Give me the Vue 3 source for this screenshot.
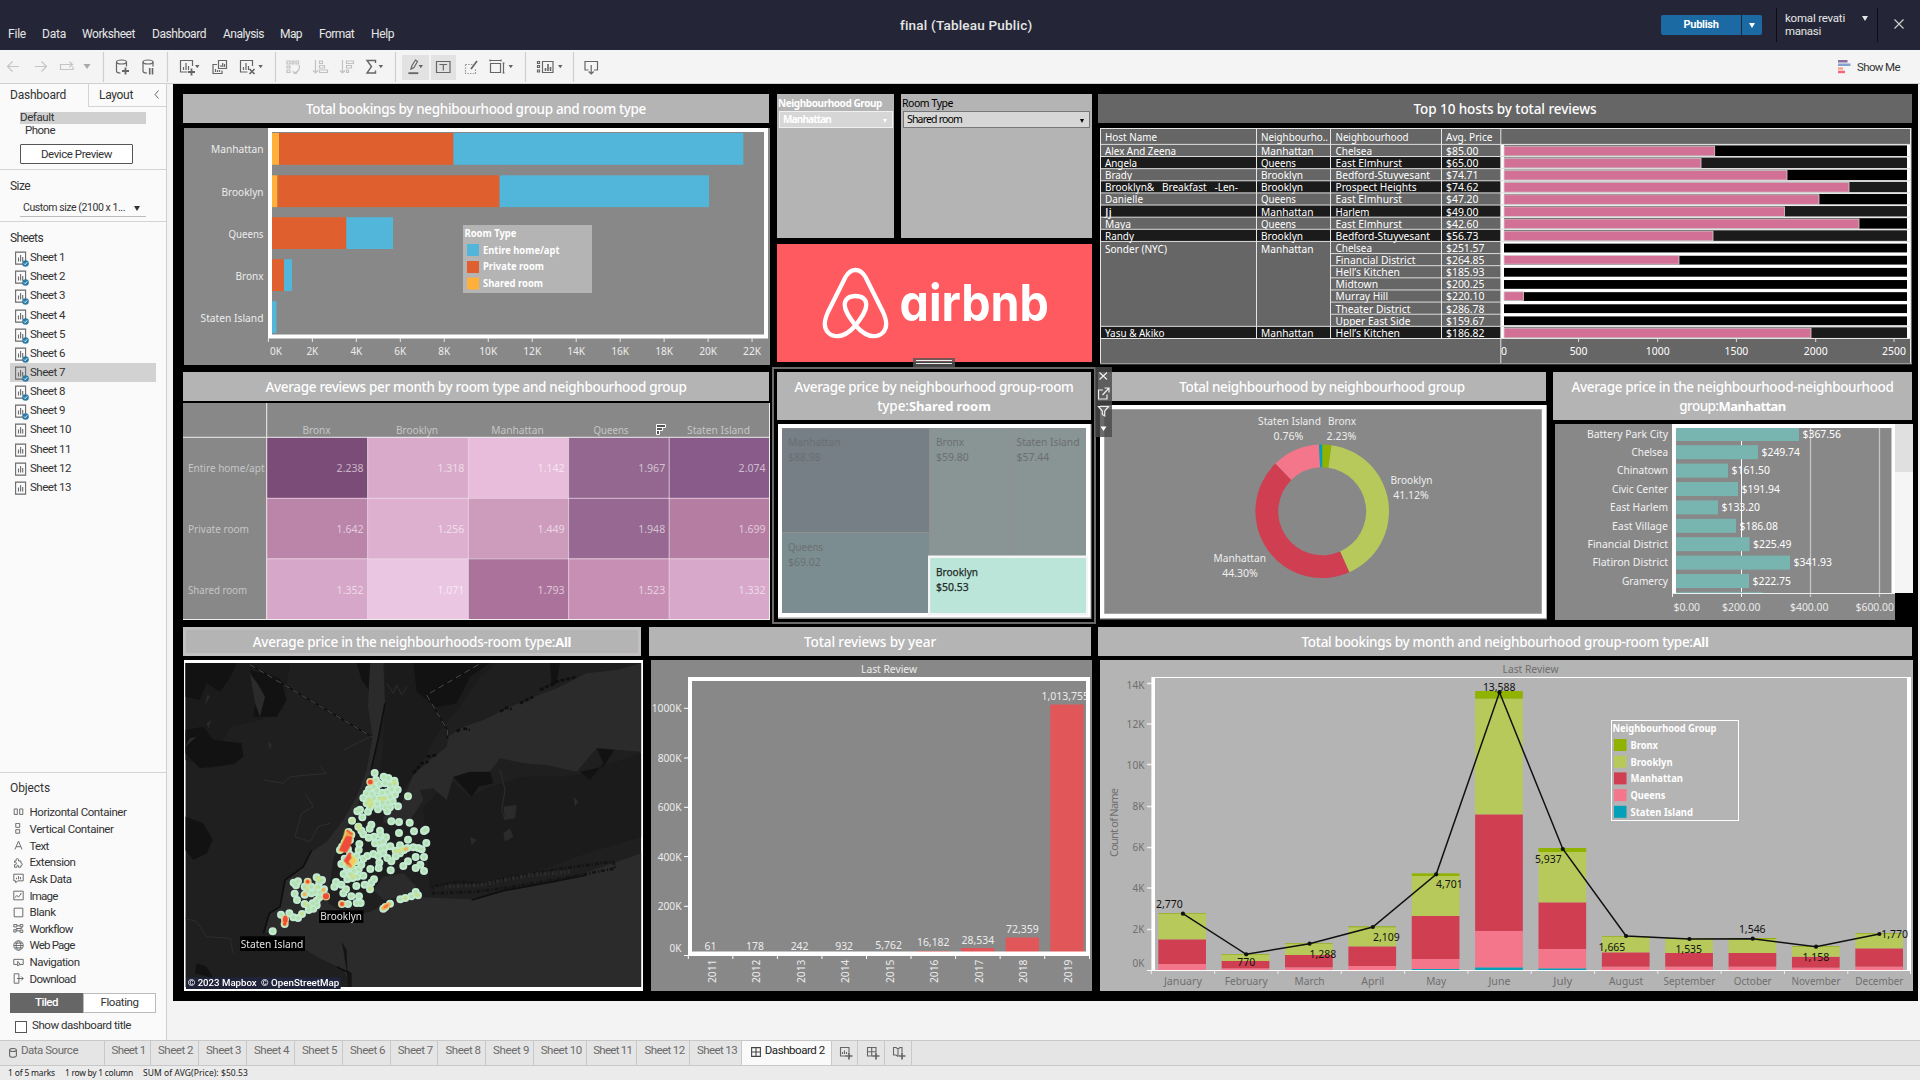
<script setup>
import { h } from 'vue'

/* Widths of the recurring category names on the charts */
const names = {
  'Manhattan': 52.5, 'Brooklyn': 42, 'Queens': 35, 'Bronx': 28, 'Staten Island': 63,
  'East Elmhurst': 66.5, 'Bedford-Stuyvesant': 94.5, 'Prospect Heights': 81, 'Chelsea': 36.5, 'Harlem': 34,
  'Financial District': 80, 'Hell’s Kitchen': 64.5, 'Midtown': 42.5, 'Murray Hill': 52.5,
  'Theater District': 75, 'Upper East Side': 75,
}
const widthOf = t => {
  if (names[t]) return names[t]
  if (!/^[$\d.,%K]+$/.test(t)) return undefined
  return [...t].reduce((s, c) => s + ('.,'.includes(c) ? 2.9 : c === '%' ? 9 : 5.95), 0).toFixed(1)
}

/* Chart label: y is the vertical middle of the text, w an optional exact width */
const Tx = (p, { slots }) => {
  const kids = slots.default()
  const w = p.w || widthOf(String(kids[0].children).trim())
  return h('text', {
    x: p.x,
    y: Number(p.y) + Number(p.s || 11) * 0.36,
    'text-anchor': p.a || 'start',
    textLength: w,
    lengthAdjust: w ? 'spacingAndGlyphs' : undefined,
    'font-size': p.s || 11,
    'font-weight': p.b ? 700 : undefined,
    fill: p.f,
  }, kids)
}
Tx.props = ['x', 'y', 'w', 'a', 's', 'b', 'f']

/* Tracks a label so that it takes the given width */
const vFit = {
  mounted(el, { value }) {
    if (!value) return
    const r = document.createRange()
    r.selectNodeContents(el)
    const n = el.textContent.length
    el.style.letterSpacing = (value - r.getBoundingClientRect().width) / n + 'px'
  },
}

const menu = [['File', 8, 18], ['Data', 42, 24], ['Worksheet', 82, 53], ['Dashboard', 152, 54], ['Analysis', 223, 41], ['Map', 280, 22], ['Format', 319, 35], ['Help', 371, 23]]
  .map(([t, x, w], i, a) => ({ t, w, slot: (a[i + 1] ? a[i + 1][1] : 400) - x }))

const sheets = Array.from({ length: 13 }, (_, i) => ({ n: i + 1, used: i < 9, on: i === 6 }))
const objects = [['Horizontal Container', 97], ['Vertical Container', 84], ['Text', 19], ['Extension', 46], ['Ask Data', 42], ['Image', 28], ['Blank', 26], ['Workflow', 43], ['Web Page', 45], ['Navigation', 50], ['Download', 46]]
const objIcons = [
  'M1.5 2.5h4v7h-4zM8.5 2.5h4v7h-4z',
  'M3.5 .5h5v5h-5zM3.5 8.5h5v4.5h-5z',
  'M2.5 12L7 1.500L11.500 12M4 8.500h6',
  'M4 5V3.500a1.500 1.500 0 0 1 3 0V5h3v2.500a1.700 1.700 0 0 1 0 3.500H10v2H7v-1.500a1 1 0 0 0-2 0V13H2v-3.500H3a1.300 1.300 0 0 0 0-2.700H2V5z',
  'M1 1.500h12v8.500H6l-2.500 2.500V10H1zM4.500 8V6M7 8V4M9.500 8V5',
  'M1 1.500h12v11H1zM2 10l3-3 2 2 3.500-4.500M9.500 4.500h1',
  'M1.500 1.500h11v11h-11z',
  'M1 2h4v3H1zM9 2h3.500v3H9zM1 8.500h3v3H1zM9 9h3.500v3H9zM5 3.500h4M4 7h7V5M5 7v3h4',
  'M7 1a6 6 0 1 0 .01 0M1 7h12M7 1c-4 3-4 9 0 12M7 1c4 3 4 9 0 12M2 4h10M2 10h10',
  'M1 3h12v6.500h-3M1 3v6.500h4M6 5.500v6l1.600-1.600h2.200z',
  'M1.500 1h6v12h-6zM5 7h8M10.500 4.500L13 7l-2.500 2.500',
]

const tabs = [['Sheet 1', 46, 34], ['Sheet 2', 48, 35], ['Sheet 3', 48, 35], ['Sheet 4', 48, 35], ['Sheet 5', 48, 35], ['Sheet 6', 48, 35], ['Sheet 7', 47.5, 35], ['Sheet 8', 48, 35], ['Sheet 9', 48, 36], ['Sheet 10', 52.5, 41], ['Sheet 11', 50.5, 39], ['Sheet 12', 53, 40], ['Sheet 13', 52, 40]]

/* Bookings by group and room type */
const BL = '#52b6da', OR = '#e05f2e', YE = '#ffb03b'
const rooms = [
  { n: 'Manhattan', y: 133, s: [[272, 279, YE], [279, 453.5, OR], [453.5, 743.3, BL]] },
  { n: 'Brooklyn', y: 175.3, s: [[272, 277.5, YE], [277.5, 499.6, OR], [499.6, 709, BL]] },
  { n: 'Queens', y: 217.2, s: [[272, 346.3, OR], [346.3, 393, BL]] },
  { n: 'Bronx', y: 259.2, s: [[272, 284, OR], [284, 292, BL]] },
  { n: 'Staten Island', y: 301.2, s: [[272, 276.5, BL]] },
]
const kTicks = Array.from({ length: 12 }, (_, i) => ({ x: 268.4 + i * 43.97, t: i * 2 + 'K' }))

/* Hosts */
const hosts = [
  ['Alex And Zeena', 71, 'Manhattan', 'Chelsea', '$85.00', 1714.7],
  ['Angela', 32, 'Queens', 'East Elmhurst', '$65.00', 1701],
  ['Brady', 27, 'Brooklyn', 'Bedford-Stuyvesant', '$74.71', 1787],
  ['Brooklyn&\u00a0\u00a0 Breakfast\u00a0\u00a0 -Len-', 133, 'Brooklyn', 'Prospect Heights', '$74.62', 1849],
  ['Danielle', 38, 'Queens', 'East Elmhurst', '$47.20', 1819],
  ['Jj', 7, 'Manhattan', 'Harlem', '$49.00', 1784.5],
  ['Maya', 26, 'Queens', 'East Elmhurst', '$42.60', 1859],
  ['Randy', 29, 'Brooklyn', 'Bedford-Stuyvesant', '$56.73', 1713],
  ['Sonder (NYC)', 62, 'Manhattan', 'Chelsea', '$251.57', 0],
  ['', 0, '', 'Financial District', '$264.85', 1679],
  ['', 0, '', 'Hell’s Kitchen', '$185.93', 0],
  ['', 0, '', 'Midtown', '$200.25', 0],
  ['', 0, '', 'Murray Hill', '$220.10', 1523.5],
  ['', 0, '', 'Theater District', '$286.78', 0],
  ['', 0, '', 'Upper East Side', '$159.67', 0],
  ['Yasu & Akiko', 59.5, 'Manhattan', 'Hell’s Kitchen', '$186.82', 1811],
].map((r, i) => ({
  name: r[0], w: r[1], group: r[2], hood: r[3], price: r[4], end: r[5], i,
  y: 144.4 + i * 12.13,
  dark: [1, 3, 5, 7, 15].includes(i),
  sub: i > 7 && i < 15,
  bx: i > 7 && i < 15 ? 2.4 : 1.2,
}))
const hostTicks = [['0', 1504], ['500', 1578.6], ['1000', 1657.7], ['1500', 1736.4], ['2000', 1815.7], ['2500', 1894]]

/* Reviews per month */
const cx = [266.7, 367.6, 468.4, 568.6, 669.2, 769.6]
const cy = [437, 498, 558.5, 619.3]
const heatHead = [['Bronx', 316.5], ['Brooklyn', 417], ['Manhattan', 517.5], ['Queens', 611], ['Staten Island', 718.5]]
const heat = [
  ['Entire home/apt', 76.5, [['2.238', '#7b4c77'], ['1.318', '#d9aaca'], ['1.142', '#e7bddb'], ['1.967', '#936790'], ['2.074', '#895b8a']]],
  ['Private room', 61, [['1.642', '#bb84a9'], ['1.256', '#ddb0d0'], ['1.449', '#cd9bbc'], ['1.948', '#966892'], ['1.699', '#b57da2']]],
  ['Shared room', 59, [['1.352', '#d6a7c8'], ['1.071', '#eac6e2'], ['1.793', '#ab739b'], ['1.523', '#c78fb4'], ['1.332', '#d7a8c9']]],
]

/* Share of groups */
const shares = [[2.23, '#8fb300'], [41.12, '#b6c95a'], [44.3, '#d03e52'], [11.59, '#f3768a'], [0.76, '#049fb8']]
let acc = 0
const arcs = shares.map(([v, c]) => {
  const p = (r, t) => `${(1322.2 + r * Math.sin(t * Math.PI / 50)).toFixed(2)} ${(511.3 - r * Math.cos(t * Math.PI / 50)).toFixed(2)}`
  const a = acc
  acc += v
  return { c, d: `M${p(66.8, a)}A66.8 66.8 0 0 1 ${p(66.8, acc)}L${p(44, acc)}A44 44 0 0 0 ${p(44, a)}Z` }
})

/* Price per neighbourhood */
const prices = [['Battery Park City', 81, '$367.56', 1799], ['Chelsea', 36.5, '$249.74', 1758], ['Chinatown', 51, '$161.50', 1728], ['Civic Center', 56, '$191.94', 1738], ['East Harlem', 58, '$133.20', 1718], ['East Village', 56, '$186.08', 1736], ['Financial District', 80.5, '$225.49', 1749.5], ['Flatiron District', 75.5, '$341.93', 1790], ['Gramercy', 46, '$222.75', 1749]]
  .map(([n, w, v, e], i) => ({ n, w, v, e, y: 434 + i * 18.4 }))

/* Reviews by year */
const years = [['2011', '61', 946.5, 0], ['2012', '178', 946.5, 0], ['2013', '242', 946.5, 0], ['2014', '932', 946.5, 0], ['2015', '5,762', 945, 0], ['2016', '16,182', 942.5, 951], ['2017', '28,534', 940, 948], ['2018', '72,359', 929, 937.5], ['2019', '1,013,755', 696.3, 704.5]]
  .map(([yr, v, ly, top], i) => ({ yr, v, ly, top, x: 710.5 + i * 44.55 }))
const yearAxis = [['1000K', 708.3], ['800K', 758], ['600K', 807.3], ['400K', 856.6], ['200K', 906.3]]

/* Bookings by month: tops of the stacked segments, staten island up to bronx */
const MX = v => 1090 + v / 1.889
const MY = v => 620 + v / 3
const months = [
  ['January', [1050, 1032, 958, 881, 879], 881, '2,770', 150, 853, 38],
  ['February', [1050, 1045, 1023, 1004, 1002], 1003, '770', 295, 1027, 43],
  ['March', [1050, 1042, 1005, 971, 969], 971, '1,288', 440, 1003, 30],
  ['April', [1050, 1038, 979, 922, 919], 921, '2,109', 560, 952, 23],
  ['May', [1047, 1017, 888, 768, 760], 763, '4,701', 679, 793, 20],
  ['June', [1042, 933, 583, 236, 213], 217, '13,588', 773, 201, 22],
  ['July', [1045, 987, 847, 696, 684], 687, '5,937', 866, 718, 19],
  ['August', [1050, 1040, 997, 950, 948], 948, '1,665', 986, 980, 34],
  ['September', [1050, 1040, 999, 957, 955], 957, '1,535', 1131, 988, 52],
  ['October', [1050, 1040, 999, 957, 954], 956, '1,546', 1251, 928, 38],
  ['November', [1050, 1043, 1010, 980, 978], 980, '1,158', 1371, 1010, 49],
  ['December', [1050, 1040, 985, 941, 939], 942, '1,770', 1520, 942, 48],
].map(([n, tops, ly, v, lx, lby, w], i) => ({
  n, v, w, x: MX(129 + 119.7 * i), c: MX(175.5 + 119.6 * i), py: MY(ly), lx: MX(lx), lby: MY(lby),
  segs: tops.map((t, k) => ({ y: MY(t), h: ((k ? tops[k - 1] : 1050) - t) / 3, c: ['#049fb8', '#f3768a', '#d03e52', '#b6c95a', '#8fb300'][k] })),
}))
const monthLine = months.map(m => m.c.toFixed(1) + ',' + m.py.toFixed(1)).join(' ')
const countAxis = [['14K', 685, 683.5], ['12K', 724, 724], ['10K', 765, 764.5], ['8K', 806.5, 806.5], ['6K', 847.5, 847.5], ['4K', 888, 888], ['2K', 929.5, 929.5], ['0K', 963, 0]]
const groupKey = [['Bronx', '#8fb300', 27.5], ['Brooklyn', '#b6c95a', 42], ['Manhattan', '#d03e52', 52.5], ['Queens', '#f3768a', 35], ['Staten Island', '#049fb8', 62.5]]

/* Density map points */
const dots = `614 459 641 470 655 474 673 482 601 486 618 480 597 508 611 500 628 492 645 490 660 494 675 492 665 508 683 509 620 512 636 518 652 516 606 522 590 520 580 534 596 538 612 534 628 534 644 534 660 530 675 524 590 550 604 554 622 552 638 548 654 548 668 544 684 559 600 562 624 568 646 562 660 562 652 574 594 575 577 592 562 574 570 569 546 602 714 529
664 604 687 606 719 608 732 634 762 633 767 629 687 639 714 659 769 669 730 682 755 688 762 711 737 711 751 734 737 744 762 753 700 738 714 724 662 751 652 714 664 724 677 709 690 700 677 692 661 679 644 683 631 687 690 676 702 690 712 684 745 684
565 620 574 632 580 643 596 653 604 614 599 626 612 650 615 670 630 632 631 645 648 652 640 664 628 668 568 672 566 690 592 708 610 702 624 708 640 700 628 728 626 744 601 747 580 716 574 734 566 748 552 752 540 762 521 762 580 767 562 770 548 774 532 778 498 786 493 800 514 794 528 808 520 820 559 798 584 794 604 788 612 778 600 808 544 829 567 829 560 849 572 849 534 852 516 852
536 636 544 644 540 660 524 668 516 680 510 690 534 688 540 704 524 716 514 732 530 742 546 742 556 724 560 708
371 788 378 796 384 784 413 785 404 800 412 812 424 800 440 772 448 786 456 780 445 800 462 808 468 829 450 818 436 816 424 820 404 824 374 821 381 840 404 852 416 858 428 850 440 842 448 832 416 870 430 866 440 856
333 884 358 880 370 892 384 894 396 882 345 898 344 912 308 934 660 851 646 861 640 866 691 838 706 834 724 829 737 816 744 826`.split(/\s+/).map(Number)
const pts = []
for (let i = 0; i < dots.length; i += 2) pts.push([dots[i], dots[i + 1]])
</script>

<template>
  <div class="app">
    <header class="top">
      <nav class="menu"><span v-for="m in menu" :key="m.t" :style="{ width: m.slot + 'px' }"><b v-fit="m.w">{{ m.t }}</b></span></nav>
      <div class="doc"><span v-fit="132">final (Tableau Public)</span></div>
      <div class="account">
        <div class="publish"><span v-fit="35">Publish</span></div>
        <div class="publish-more"><i class="tri"></i></div>
        <div class="user"><p><span v-fit="60">komal revati</span><br><span v-fit="36">manasi</span></p><i class="tri"></i></div>
        <svg class="close" width="10" height="10" viewBox="0 0 10 10"><path d="M.5 .5L9.5 9.500M9.500 .5L.5 9.500" /></svg>
      </div>
    </header>

    <div class="toolbar">
      <svg width="600" height="33" viewBox="0 50 600 33" fill="none" stroke="#666" stroke-width="1.200">
        <g stroke="#c4c4c4"><path d="M19 66.500H8M12.500 61.500l-5 5 5 5M35 66.500h11M41.500 61.500l5 5-5 5" /><path d="M60.500 65.500v4h12.500v-3M60.500 67v-2.500h11.500M69.500 61.800l3 2.700-3 2.700" /></g>
        <path d="M83.500 64h7l-3.500 5z" fill="#aaa" stroke="none" />
        <path d="M103.500 52v30M167.500 52v30M275.500 52v30M395.500 52v30M525.500 52v30M573.500 52v30" stroke="#cfcfcf" />
        <g><ellipse cx="121.500" cy="62" rx="5" ry="2" /><path d="M116.500 62v9c0 1 1.500 2 4 2M126.500 62v4.500" /><path d="M125.500 67.500v7M122 71h7" stroke-width="1.800" /></g>
        <g><ellipse cx="148" cy="62" rx="5" ry="2" /><path d="M143 62v9c0 1 1.500 2 4 2M153 62v4.500" /><path d="M149.700 68v6.500M152.500 68v6.500" stroke-width="1.600" /></g>
        <path d="M192.500 66v-5.500h-12V72h7M183.500 70v-3M186 70v-7M188.500 70v-4" /><path d="M191.500 68.500v7M188 72h7" stroke-width="1.800" />
        <path d="M218.500 60.500h8v8h-8zM217 64.500h-4v9h9v-3M221 67v-2M222.700 67v-4M224.500 67v-3M215.500 72v-3M217.500 72v-2M219.500 72v-2" />
        <path d="M252.500 66v-5.500h-12V72h7M243.500 70v-3M246 70v-7M248.500 70v-4" /><path d="M249.500 69l5 5M254.500 69l-5 5" stroke-width="1.700" />
        <g stroke="#c2c2c2"><path d="M287 61h3v3h-3zM292 61h2v3h-2zM296 61h2.500v3H296zM287 66h3v2h-3zM287 70h3v2.500h-3zM299 65c1.500 4-1 7-5 8M293 71l1.500 2.500 3-.5" />
          <path d="M315.500 60v13M313 70.500l2.500 2.500 2.500-2.500M319.500 61h3v2.500h-3zM319.500 65.500h5V68h-5zM319.500 70h8v2.500h-8z" />
          <path d="M342.500 60v13M340 70.500l2.500 2.500 2.500-2.500M346.500 61h7v2.500h-7zM346.500 65.500h5V68h-5zM346.500 70h2v2.500h-2z" /></g>
        <path d="M375.500 63v-2.500H367l4.500 6-4.500 6.500h8.500V70.500" stroke-width="1.400" />
        <path d="M402 55h27v25h-27zM431 55h25v25h-25z" fill="#e2e2e2" stroke="none" />
        <path d="M411 69l1-3.500 3.500-5.500 2 1.500-3.500 6zM408.500 73h10" /><path d="M408.500 73.300h9.500" stroke-width="1.600" />
        <path d="M436.500 61.500h13.500v11h-13.500z" /><path d="M440 65v-.5h6.500v.5M443.300 64.500v6" />
        <path d="M465.500 64.500h7M465.500 64.500v9h10v-5" stroke="#999" stroke-dasharray="1.500 1.200" /><path d="M471 69l6-8" stroke-width="1.700" />
        <path d="M490.500 63.500h10v9h-10zM490 60.500h11M503.500 63v10M490 59.500v2M501 59.500v2M502.500 63h2M502.500 73h2" />
        <path d="M542.500 61.500h10.500v11h-10.500zM537.500 61.500h2v2h-2zM537.500 65.500h2v2h-2zM537.500 70h2v2h-2z" /><path d="M545.500 71v-3M548 71v-7M550.500 71v-4" stroke-width="1.600" />
        <path d="M588.500 70h-3.500v-8.500h12.500V70H594M591.200 65v9M588.700 71.500l2.500 2.500 2.500-2.500" />
        <path d="M195 65h4.500l-2.200 3.300zM258.300 65h4.500l-2.200 3.300zM378.600 65h4.500l-2.200 3.300zM418.500 65h4.500l-2.200 3.300zM508.500 65h4.500l-2.200 3.300zM558 65h4.500l-2.200 3.300z" fill="#666" stroke="none" />
      </svg>
      <div class="showme">
        <svg width="14" height="15" viewBox="0 0 14 15"><path d="M0 1h9.500v2.500H0z" fill="#8a6fa0" /><path d="M0 4.500h12.500V7H0z" fill="#84a2cf" /><path d="M0 8.300h5v2.500H0z" fill="#f7a58a" /><path d="M0 11.700h7v2.500H0z" fill="#f5647a" /></svg>
        <span v-fit="43">Show Me</span>
      </div>
    </div>

    <main>
      <aside>
        <div class="side-tabs">
          <div class="st on"><span v-fit="56">Dashboard</span></div>
          <div class="st"><span v-fit="34">Layout</span><svg width="5" height="9" viewBox="0 0 5 9"><path d="M4.500 .5L1 4.500 4.500 8.500" fill="none" stroke="#666" /></svg></div>
        </div>
        <div class="devices">
          <p class="dev on"><span v-fit="34">Default</span></p>
          <p class="dev ph"><span v-fit="30">Phone</span></p>
          <div class="preview"><span v-fit="71">Device Preview</span></div>
        </div>
        <div class="size">
          <h4><span v-fit="20">Size</span></h4>
          <div class="drop"><span v-fit="102">Custom size (2100 x 1...</span><i class="tri"></i></div>
        </div>
        <div class="sheets">
          <h4><span v-fit="33">Sheets</span></h4>
          <div v-for="s in sheets" :key="s.n" class="sheet" :class="{ on: s.on }">
            <svg width="15" height="17" viewBox="0 0 15 17"><path d="M.6 2.100h10v12h-10zM3.500 11.500v-4M5.600 11.500V5M7.700 11.500V7" fill="none" stroke="#6a6a6a" stroke-width="1.100" /><g v-if="s.used"><circle cx="10.500" cy="13.500" r="3.300" fill="#2b7ba5" /><path d="M9 13.500l1.200 1.200 2-2.400" fill="none" stroke="#fff" stroke-width=".9" /></g></svg>
            <span v-fit="s.n > 9 ? 41 : 35">Sheet {{ s.n }}</span>
          </div>
        </div>
        <div class="objects">
          <h4><span v-fit="40">Objects</span></h4>
          <div v-for="(o, i) in objects" :key="i" class="obj">
            <svg width="11" height="11" viewBox="0 0 14 14"><path :d="objIcons[i]" fill="none" stroke="#666" stroke-width="1.200" /></svg>
            <span v-fit="o[1]">{{ o[0] }}</span>
          </div>
          <div class="mode"><b><span v-fit="23">Tiled</span></b><b><span v-fit="38">Floating</span></b></div>
          <div class="check"><i></i><span v-fit="99">Show dashboard title</span></div>
        </div>
      </aside>

      <section class="board">
        <div class="row r1">
          <div class="zone z1">
            <h3><span v-fit="340">Total bookings by neghibourhood group and room type</span></h3>
            <svg width="586" height="237" viewBox="184 128 586 237" class="chart">
              <rect x="184" y="128" width="586" height="237" fill="#888" />
              <rect x="270" y="130" width="496" height="206.500" fill="none" stroke="#fff" stroke-width="4" />
              <g v-for="r in rooms" :key="r.n">
                <rect v-for="(s, k) in r.s" :key="k" :x="s[0]" :y="r.y" :width="s[1] - s[0]" height="31.800" :fill="s[2]" />
                <Tx x="263.500" :y="r.y + 16.500" a="end" f="#ececec">{{ r.n }}</Tx>
              </g>
              <g v-for="(k, i) in kTicks" :key="k.t"><path :d="`M${k.x} 338v4`" stroke="#e8e8e8" /><Tx :x="i ? k.x : 276" y="351.700" a="middle" s="10.500" f="#ececec">{{ k.t }}</Tx></g>
              <rect x="463" y="225" width="129" height="68" fill="#b4b4b4" />
              <Tx x="464.500" y="233.700" w="52" b="1" s="10.500">Room Type</Tx>
              <rect x="467" y="244" width="12" height="12" :fill="BL" /><Tx x="483" y="250.200" w="76.500" b="1" s="10.500">Entire home/apt</Tx>
              <rect x="467" y="261" width="12" height="12" :fill="OR" /><Tx x="483" y="266.700" w="61" b="1" s="10.500">Private room</Tx>
              <rect x="467" y="277.500" width="12" height="12" :fill="YE" /><Tx x="483" y="283.500" w="60" b="1" s="10.500">Shared room</Tx>
            </svg>
          </div>
          <div class="zone z2">
            <div class="filters">
              <div class="filter f1"><span v-fit="104">Neighbourhood Group</span><div class="sel"><span v-fit="48">Manhattan</span><i class="tri"></i></div></div>
              <div class="filter f2"><span v-fit="51">Room Type</span><div class="sel"><span v-fit="55">Shared room</span><i class="tri"></i></div></div>
            </div>
            <svg width="315" height="118" viewBox="777 244 315 118" class="logo">
              <rect x="777" y="244" width="315" height="118" fill="#ff5a60" />
              <path d="M855.500 325.500C849 317 844.700 311 844.700 304.800C844.700 299 849 296 855.500 296C862 296 866.300 299 866.300 304.800C866.300 311 862 317 855.500 325.500C848 334 843 336.200 837.500 336.200C829 336.200 824.800 330 824.800 324C824.800 320 826 316.500 828 312L845.500 277C848.500 272 851.500 270 855.500 270C859.500 270 862.500 272 865.500 277L883 312C885 316.500 886.200 320 886.200 324C886.200 330 882 336.200 873.500 336.200C868 336.200 863 334 855.500 325.500Z" fill="none" stroke="#fff" stroke-width="4.300" />
              <text x="899.500" y="320.500" textLength="149.500" lengthAdjust="spacingAndGlyphs" class="wordmark">airbnb</text>
            </svg>
          </div>
          <div class="zone z3">
            <h3 class="dark"><span v-fit="183">Top 10 hosts by total reviews</span></h3>
            <svg width="812" height="236.500" viewBox="1100 128 812 236.500" class="chart">
              <rect x="1100" y="128" width="812" height="236.500" fill="#666" />
              <rect x="1501" y="144" width="410" height="194.500" fill="#fff" />
              <g v-for="r in hosts" :key="r.i">
                <rect v-if="r.dark" x="1100" :y="r.y" width="401" height="12.100" fill="#1b1b1b" />
                <rect x="1504" :y="r.y + r.bx - .2" width="403" :height="r.sub ? 8.800 : 10.600" :fill="r.dark ? '#1b1b1b' : '#000'" />
                <rect v-if="r.end" x="1504" :y="r.y + 1.800" :width="r.end - 1504" :height="r.sub ? 8.800 : 9.600" fill="#d27195" stroke="#d9d0d4" stroke-width=".8" />
                <path v-if="r.i < 9 || r.i > 14" :d="`M1100 ${r.y}H1911`" stroke="#ddd" />
                <path v-else :d="`M1330 ${r.y}H1501`" stroke="#ddd" />
                <Tx v-if="r.name" x="1105" :y="r.y + (r.i === 8 ? 7.700 : 6.500)" :w="r.w">{{ r.name }}</Tx>
                <Tx v-if="r.group" x="1261" :y="r.y + (r.i === 8 ? 7.700 : 6.500)">{{ r.group }}</Tx>
                <Tx x="1335.500" :y="r.y + 6.500">{{ r.hood }}</Tx>
                <Tx x="1446" :y="r.y + 6.500" :w="r.price.length > 6 ? 38.500 : 32.500">{{ r.price }}</Tx>
              </g>
              <path d="M1100 128.500H1911M1100 338.500H1911M1256.500 128V338.500M1330.500 128V338.500M1441.500 128V338.500M1500.800 128V364M1100.500 128V363M1910.500 128V363" stroke="#e4e4e4" fill="none" />
              <path d="M1100 363.500H1912" stroke="#999" />
              <Tx x="1105" y="137.300" w="52">Host Name</Tx><Tx x="1261" y="137.300" w="67">Neighbourho..</Tx><Tx x="1335.500" y="137.300" w="73">Neighbourhood</Tx><Tx x="1446" y="137.300" w="46.500">Avg. Price</Tx>
              <g v-for="t in hostTicks" :key="t[0]"><path v-if="t[0] !== '0'" :d="`M${t[1]} 339v3`" stroke="#ddd" /><Tx :x="t[1]" y="351.700" a="middle" s="10.500">{{ t[0] }}</Tx></g>
            </svg>
          </div>
        </div>

        <div class="row r2">
          <div class="zone z1">
            <h3><span v-fit="421">Average reviews per month by room type and neighbourhood group</span></h3>
            <svg width="587" height="217" viewBox="183 403 587 217" class="chart">
              <rect x="183" y="403" width="587" height="217" fill="#888" />
              <Tx v-for="c in heatHead" :key="c[0]" :x="c[1]" y="430.500" a="middle" f="#c6c6c6">{{ c[0] }}</Tx>
              <g v-for="(r, i) in heat" :key="r[0]">
                <Tx x="188" :y="cy[i] + 31.500" :w="r[1]" f="#c6c6c6">{{ r[0] }}</Tx>
                <g v-for="(c, k) in r[2]" :key="k">
                  <rect :x="cx[k]" :y="cy[i]" :width="cx[k + 1] - cx[k]" :height="cy[i + 1] - cy[i]" :fill="c[1]" />
                  <Tx :x="cx[k + 1] - 4" :y="cy[i] + 31.500" a="end" w="27" f="rgba(255,255,255,.6)">{{ c[0] }}</Tx>
                </g>
              </g>
              <path d="M266.700 403V619M183 437.300H770M769.500 403V619M183 619.500H770" stroke="#eee" fill="none" />
              <path d="M367.600 437V619M468.400 437V619M568.600 437V619M669.200 437V619M267 498.300H770M267 558.800H770" stroke="#f2dcec" fill="none" stroke-opacity=".75" />
              <path d="M656.500 424.500h9v3h-9zM656.500 427.500h6v3h-6zM656.500 430.500h3v4h-3z" fill="#555" stroke="#fff" />
            </svg>
          </div>
          <div class="zone z2">
            <h3 class="two"><span v-fit="279">Average price by neighbourhood group-room</span><br><span v-fit="113.500">type:<b>Shared room</b></span></h3>
            <svg width="314" height="196" viewBox="778 424 314 196" class="chart">
              <rect x="778" y="424" width="313.500" height="195" fill="#999" />
              <rect x="778" y="424" width="312.500" height="193.500" fill="#fff" />
              <rect x="782" y="428" width="304" height="185" fill="#918f90" />
              <rect x="782" y="428.500" width="147" height="103.500" fill="#767e86" />
              <rect x="782" y="533" width="147" height="80" fill="#7b8d90" />
              <rect x="930" y="428.500" width="79.300" height="128" fill="#899494" />
              <rect x="1010.200" y="428.500" width="75.800" height="128" fill="#899494" />
              <rect x="928" y="555.500" width="160" height="60" fill="#f5f5f5" />
              <rect x="930.200" y="558" width="155.800" height="55" fill="#bce5d9" />
              <g fill="#6b6f72"><Tx x="788" y="442.300">Manhattan</Tx><Tx x="788" y="457.300">$88.98</Tx><Tx x="936" y="442.300">Bronx</Tx><Tx x="936" y="457.300">$59.80</Tx><Tx x="1016.500" y="442.300">Staten Island</Tx><Tx x="1016.500" y="457.300">$57.44</Tx><Tx x="788" y="547.300">Queens</Tx><Tx x="788" y="562.300">$69.02</Tx></g>
              <g fill="#1e2a28" stroke="#1e2a28" stroke-width=".25"><Tx x="936" y="572.300">Brooklyn</Tx><Tx x="936" y="587.300">$50.53</Tx></g>
            </svg>
          </div>
          <div class="zone z4">
            <h3><span v-fit="285.500">Total neighbourhood by neighbourhood group</span></h3>
            <svg width="448" height="215" viewBox="1100 405 448 215" class="chart">
              <rect x="1100" y="405" width="447" height="214.500" fill="#888" />
              <rect x="1102" y="407" width="442" height="209" fill="none" stroke="#fff" stroke-width="4.500" />
              <path v-for="a in arcs" :key="a.c" :d="a.d" :fill="a.c" />
              <g fill="#eee">
                <Tx x="1258" y="421.500">Staten Island</Tx><Tx x="1288.500" y="436.500" a="middle">0.76%</Tx>
                <Tx x="1328" y="421.500">Bronx</Tx><Tx x="1341.500" y="436.500" a="middle">2.23%</Tx>
                <Tx x="1390.500" y="480">Brooklyn</Tx><Tx x="1411" y="495" a="middle">41.12%</Tx>
                <Tx x="1213.500" y="558.300">Manhattan</Tx><Tx x="1240" y="573.300" a="middle">44.30%</Tx>
              </g>
            </svg>
          </div>
          <div class="zone z5">
            <h3 class="two"><span v-fit="322">Average price in the neighbourhood-neighbourhood</span><br><span v-fit="106.500">group:<b>Manhattan</b></span></h3>
            <div class="scroller">
              <svg width="340" height="196" viewBox="1555 424 340 196" class="chart">
                <rect x="1555" y="424" width="340" height="196" fill="#888" />
                <path d="M1674 593V426H1893.500V593" fill="none" stroke="#fff" stroke-width="4" />
                <path d="M1741.500 428V597" stroke="#fff" /><path d="M1810.500 428V597M1879.500 428V597" stroke="#c4c4c4" stroke-width="1.300" />
                <g v-for="(p, i) in prices" :key="p.n">
                  <rect x="1676" :y="i ? p.y - 7.200 : 428" :width="p.e - 1676" :height="i ? 14 : 13" fill="#78b5b0" />
                  <Tx x="1668" :y="p.y - .3" a="end" :w="p.w" f="#f2f2f2">{{ p.n }}</Tx>
                  <Tx :x="p.e + 3.500" :y="p.y - .3" w="38.500">{{ p.v }}</Tx>
                </g>
                <path d="M1676 592.300H1763" stroke="#78b5b0" />
                <path d="M1672 593.500H1895M1672.500 593v4" stroke="#eee" />
                <g fill="#eaeaea"><Tx x="1673.500" y="606.700" w="26.500">$0.00</Tx><Tx x="1722" y="606.700" w="38.500">$200.00</Tx><Tx x="1790" y="606.700" w="38.500">$400.00</Tx><Tx x="1855.500" y="606.700" w="38.500">$600.00</Tx></g>
              </svg>
              <div class="bar"><i></i></div>
            </div>
          </div>
        </div>

        <div class="row r3">
          <div class="zone z6">
            <h3 class="ringed"><span v-fit="318.500">Average price in the neighbourhoods-room type:<b>All</b></span></h3>
            <div class="map">
              <svg width="459" height="331" viewBox="42 120 1377 993">
                <rect x="42" y="120" width="1377" height="993" fill="#fff" />
                <svg x="46" y="129" width="1368" height="972" viewBox="46 129 1368 972">
                  <rect x="46" y="129" width="1368" height="972" fill="#1f1f1f" />
                  <g fill="#1b1b1b"><path d="M46 129H360L340 270L270 300L180 320L150 380L220 380L200 430L120 445L46 420Z" /><path d="M700 129H980L930 170L870 260L810 330L760 420L680 540L620 520L640 380L645 129Z" /><path d="M840 480L900 530L960 500L1060 470L1200 470L1414 400V650L1250 700L1000 790L780 800L760 560Z" /></g>
                  <g fill="#121212"><path d="M46 129H200L185 165L150 215L110 190L90 240L46 230ZM46 330L100 320L130 360L215 370L220 410L190 432L90 445L46 400ZM240 150L330 175L350 240L320 290L250 290L262 220ZM46 590L100 610L128 660L110 700L70 720L46 690ZM560 129H600V215L575 180ZM730 129H960L900 170L860 250L800 262L740 215ZM1140 129H1170L1160 190L1145 200ZM850 470L905 530L925 500L970 490L960 455L900 455ZM1230 455L1260 480L1300 430L1280 385L1340 380L1300 440ZM80 1030L110 1040L130 1075L75 1060ZM1060 405L1075 430H1055Z" /></g>
                  <g fill="#2b2b2b">
                    <path d="M600 129H640L645 250L626 350L605 450L585 500L548 590L510 660L490 720L480 790L475 850L540 890L600 875L650 852L760 832L900 838L1000 815L1200 775L1414 700V1101H545L520 1050L440 1010L400 985L340 960L285 935L300 880L330 860L348 780L400 740L425 695L470 665L520 600L560 530L590 450L608 350L594 260Z" />
                    <path d="M1414 129L1340 150L1250 160L1160 205L1080 235L1000 270L940 300L880 320L835 350L830 380L780 420L730 465L690 560L640 590L640 610L720 600L760 540L750 510L790 505L830 540L850 470L900 455L960 455L990 415L1060 430L1130 435L1220 455L1280 385L1414 395Z" />
                    <path d="M640 770L700 760L740 800L700 830L640 840L610 810Z" />
                    <path d="M262 190L285 230L270 290L255 250L240 160ZM120 230L105 255L112 225ZM80 350L45 380L60 355ZM125 300L115 325L110 310ZM295 365l12 10-10 15zM900 650l20 10-15 15zM1000 560l40-5-5 40-30 5zM1000 640l20-15 10 25-25 15zM1210 530l15 15-10 15z" />
                  </g>
                  <g fill="none" stroke="#2e2e2e" stroke-width="3"><path d="M405 520L430 560L395 580L375 650L420 665L445 620L480 610M280 480L340 490L360 470L470 460L450 440M520 390L600 350M46 895L80 905L110 950L180 955L190 1000M650 190l20 30 10-25 15 30 15-25M990 450l15 60-10 60 10 30" /></g>
                  <g fill="none" stroke="#0f0f0f" stroke-width="5"><path d="M425 690L400 740L345 780L330 860L298 880L280 940M500 1040L540 1060M645 250L626 350L603 450M905 840L1000 812L1150 785L1250 765" /><path d="M860 335l12-8M880 325l20 5M990 275l20-12 15 5M1050 250l40-20M730 460l25-30 20-5M770 410l30-5M1110 210l50-25 60-15" stroke-dasharray="12 5" stroke-width="8" /></g>
                  <path d="M515 965L530 990L532 1050L545 1060V1101H535L530 1055L520 990Z" fill="#141414" />
                  <path d="M785 800L860 785L940 790L1030 770L1180 745L1330 725L1335 745L1180 775L1030 800L920 815L790 820Z" fill="none" stroke="#141414" stroke-width="8" stroke-dasharray="4 6 12 5" />
                  <path d="M825 800L930 795L1080 765L1200 755" fill="none" stroke="#2a2a2a" stroke-width="12" stroke-dasharray="5 6 9 4" />
                  <g fill="none" stroke="#111" stroke-width="5"><path d="M240 134L608 352M925 134L770 225L832 330V360" /></g>
                  <g fill="none" stroke="#555" stroke-width="2.500" stroke-dasharray="18 12"><path d="M240 134L608 352M925 134L770 225L832 330V360" /></g>
                  <circle v-for="(p, i) in pts" :key="'a' + i" :cx="p[0]" :cy="p[1]" r="12" fill="#c3ead3" />
                  <circle v-for="(p, i) in pts" :key="'b' + i" :cx="p[0]" :cy="p[1]" r="6" fill="#b0dea6" opacity=".75" />
                  <g fill="#cfe07c" opacity=".75"><ellipse cx="600" cy="548" rx="11" ry="14" /><ellipse cx="638" cy="536" rx="12" ry="7" /><circle cx="672" cy="488" r="7" /><ellipse cx="566" cy="620" rx="7" ry="11" /><circle cx="546" cy="602" r="6" /><circle cx="714" cy="529" r="4" /><circle cx="396" cy="882" r="6" /><circle cx="445" cy="776" r="8" /><circle cx="410" cy="804" r="6" /><circle cx="438" cy="803" r="5" /><ellipse cx="408" cy="852" rx="8" ry="5" transform="rotate(40 408 852)" /><circle cx="706" cy="834" r="6" /><circle cx="740" cy="825" r="6" /><ellipse cx="692" cy="690" rx="24" ry="6" transform="rotate(-15 692 690)" /><circle cx="600" cy="806" r="6" /><circle cx="548" cy="768" r="8" /></g>
                  <g stroke-linejoin="round" stroke-linecap="round">
                    <path d="M530 632L546 640L542 660L530 690L510 694L518 668ZM540 704L524 728L544 740L558 722Z" fill="#f5d667" stroke="#d8e27a" stroke-width="10" />
                    <path d="M530 632L546 642L540 668L528 692L510 692L522 664Z" fill="#f2a24c" stroke="#f3b757" stroke-width="6" />
                    <path d="M532 632L546 642M530 650L544 652L540 676L528 696L510 690L522 664Z" fill="#ee4b38" stroke="#ee4b38" stroke-width="5" />
                    <path d="M540 702L526 726L540 740L554 724Z" fill="#f6c95e" stroke="#f6c95e" stroke-width="5" /><path d="M539 702L526 722M532 728L540 738M540 712L532 722" stroke="#ee4b38" stroke-width="9" /><path d="M535 736l6 4" stroke="#f2a24c" stroke-width="6" />
                  </g>
                  <g fill="#f2b455"><circle cx="601" cy="486" r="10" /><circle cx="413" cy="785" r="9" /><circle cx="468" cy="829" r="11" /><circle cx="516" cy="852" r="9" /><ellipse cx="345" cy="902" rx="10" ry="17" /><ellipse cx="648" cy="859" rx="17" ry="8" transform="rotate(-35 648 859)" /><circle cx="708" cy="687" r="6" /><circle cx="404" cy="823" r="6" /><circle cx="460" cy="810" r="6" /></g>
                  <g fill="#ee4b38"><circle cx="601" cy="486" r="7" /><circle cx="413" cy="785" r="5" /><circle cx="468" cy="829" r="9" /><circle cx="516" cy="852" r="6" /><ellipse cx="346" cy="898" rx="7" ry="11" /><circle cx="344" cy="912" r="5" /><ellipse cx="648" cy="859" rx="9" ry="4" transform="rotate(-35 648 859)" fill="#ef7440" /></g>
                </svg>
                <rect x="447" y="871" width="133" height="38" fill="#000" /><rect x="210" y="949" width="195" height="44" fill="#000" /><rect x="48" y="1072" width="464" height="35" fill="#20243a" />
                <g font-size="33" fill="#e2e2e2"><text x="451" y="900" textLength="125" lengthAdjust="spacingAndGlyphs">Brooklyn</text><text x="212" y="983" textLength="188" lengthAdjust="spacingAndGlyphs">Staten Island</text></g>
                <g font-size="28" fill="#fff" class="credit"><text x="53" y="1098" textLength="207" lengthAdjust="spacingAndGlyphs">© 2023 Mapbox</text><text x="273" y="1098" textLength="235" lengthAdjust="spacingAndGlyphs">© OpenStreetMap</text></g>
              </svg>
            </div>
          </div>
          <div class="zone z7">
            <h3><span v-fit="132">Total reviews by year</span></h3>
            <svg width="441" height="331" viewBox="651 660 441 331" class="chart">
              <rect x="651" y="660" width="441" height="331" fill="#888" />
              <g fill="#ececec">
                <Tx x="889" y="669.500" a="middle" w="56">Last Review</Tx>
                <g v-for="a in yearAxis" :key="a[0]"><Tx x="681.500" :y="a[1]" a="end">{{ a[0] }}</Tx><path :d="`M684 ${a[1]}h4`" stroke="#fff" /></g>
                <Tx x="681.500" y="948" a="end">0K</Tx>
                <path d="M684 955.500H1090" stroke="#fff" />
                <g v-for="y in years" :key="y.yr">
                  <rect v-if="y.top" :x="y.x - 16.700" :y="y.top" width="33.300" :height="952 - y.top" fill="#e15759" />
                  <Tx v-if="y.yr !== '2019'" :x="y.x" :y="y.ly" a="middle">{{ y.v }}</Tx>
                  <path :d="`M${y.x - 22.200} 955v4`" stroke="#fff" />
                  <text :transform="`translate(${y.x + 5} 983) rotate(-90)`" font-size="11" textLength="23.500" lengthAdjust="spacingAndGlyphs">{{ y.yr }}</text>
                </g>
                <Tx x="1041.500" y="696.300">1,013,755</Tx>
              </g>
              <path d="M1089.500 955v4" stroke="#fff" />
              <rect x="690" y="679" width="398" height="274.500" fill="none" stroke="#fff" stroke-width="4" />
            </svg>
          </div>
          <div class="zone z3">
            <h3><span v-fit="407">Total bookings by month and neighbourhood group-room type:<b>All</b></span></h3>
            <svg width="813" height="331" viewBox="1100 660 813 331" class="chart">
              <rect x="1100" y="660" width="813" height="331" fill="#b4b4b4" />
              <g fill="#6f6f6f">
                <Tx x="1530.500" y="669.500" a="middle" w="56">Last Review</Tx>
                <text transform="translate(1118 857) rotate(-90)" font-size="11" textLength="69">Count of Name</text>
                <g v-for="a in countAxis" :key="a[0]"><Tx x="1144.500" :y="a[1]" a="end">{{ a[0] }}</Tx><path v-if="a[2]" :d="`M1147 ${a[2]}h5`" stroke="#eee" stroke-width="1.500" /></g>
                <g v-for="m in months" :key="m.n"><Tx :x="m.c" y="981.500" a="middle" :w="m.w">{{ m.n }}</Tx><path :d="`M${m.c - 31.600} 970v4`" stroke="#eee" /></g>
              </g>
              <path d="M1153.200 677V970.500" stroke="#fff" stroke-width="3.600" /><path d="M1909 677V970.500" stroke="#fff" stroke-width="4" /><path d="M1152 677.500H1911M1147 970.500H1911M1910.500 970v4" stroke="#fff" />
              <g v-for="m in months" :key="m.n"><rect v-for="(s, k) in m.segs" :key="k" :x="m.x" :y="s.y" width="47.700" :height="s.h" :fill="s.c" /></g>
              <polyline :points="monthLine" fill="none" stroke="#111" stroke-width="1.500" />
              <g v-for="m in months" :key="m.n" fill="#111"><circle :cx="m.c" :cy="m.py" r="2.100" /><Tx :x="m.lx" :y="m.lby" a="middle">{{ m.v }}</Tx></g>
              <rect x="1611.500" y="720.500" width="127" height="100" fill="#b4b4b4" stroke="#fff" />
              <Tx x="1612.500" y="728.700" w="104" b="1" s="10.500">Neighbourhood Group</Tx>
              <g v-for="(g, i) in groupKey" :key="g[0]"><rect x="1614" :y="739 + i * 16.700" width="12.500" height="12" :fill="g[1]" /><Tx x="1630.500" :y="745.400 + i * 16.600" :w="g[2]" b="1" s="10.500">{{ g[0] }}</Tx></g>
            </svg>
          </div>
        </div>

        <div class="selection">
          <div class="grip"><i></i><i></i></div>
          <div class="tools">
            <svg width="17" height="70" viewBox="0 0 17 70" fill="none" stroke="#eee" stroke-width="1.200"><path d="M4.500 5.500l7.500 7M12 5.500l-7.500 7M8 23H3.500v9h8.500v-4.500M7.500 28l6-6.500M9.500 21h4.500v4.500M3.500 39.500h10l-3.800 4.500v5l-2.400 -1.500v-3.500z" /><path d="M5.500 59.500h6l-3 4.500z" fill="#fff" stroke="none" /></svg>
          </div>
        </div>
      </section>
    </main>

    <footer class="tabs">
      <div class="tab src"><svg width="8" height="10" viewBox="0 0 8 10"><path d="M.6 2v5.500c0 2.400 6.800 2.400 6.800 0V2c0-2-6.800-2-6.800 0c0 2 6.800 2 6.800 0" fill="none" stroke="#666" stroke-width="1.100" /></svg><span v-fit="57">Data Source</span></div>
      <div v-for="t in tabs" :key="t[0]" class="tab" :style="{ width: t[1] + 'px' }"><span v-fit="t[2]">{{ t[0] }}</span></div>
      <div class="tab cur"><svg width="10" height="10" viewBox="0 0 10 10"><path d="M.6 .6h8.800v8.800H.6zM5 .6v8.800M.6 5h8.800" fill="none" stroke="#444" stroke-width="1.100" /></svg><span v-fit="60">Dashboard 2</span></div>
      <div class="tab add"><svg width="14" height="14" viewBox="0 0 14 14"><path d="M10 6V1.500H1.500V10H7M3.500 8V6M5.500 8V4.500M7.500 8V6" /><path d="M10 6.500v7M6.500 10h7" stroke-width="1.700" /></svg></div>
      <div class="tab add"><svg width="14" height="14" viewBox="0 0 14 14"><path d="M10 6V1.500H1.500V10H7M5.700 1.500V10M1.500 5.700H10" /><path d="M10 6.500v7M6.500 10h7" stroke-width="1.700" /></svg></div>
      <div class="tab add"><svg width="14" height="14" viewBox="0 0 14 14"><path d="M10 6V1.500H8L6 3 4 1.500H1.500V9H4l2 1.500M6 3v7" /><path d="M10 6.500v7M6.500 10h7" stroke-width="1.700" /></svg></div>
    </footer>
    <div class="status"><span v-fit="47">1 of 5 marks</span><span v-fit="68">1 row by 1 column</span><span v-fit="105">SUM of AVG(Price): $50.53</span></div>
  </div>
</template>

<style>
html, body { margin: 0; background: #f3f3f3; overflow: hidden; }
</style>

<style scoped>
.app { width: 1920px; height: 1080px; overflow: hidden; display: flex; flex-direction: column; background: #f3f3f3; font: 11.5px/16px Roboto, "Noto Sans", sans-serif; color: #333; white-space: nowrap; }
.app * { box-sizing: border-box; }
h3, h4, p { margin: 0; font-weight: 400; }
svg { display: block; flex: none; }
.tri { width: 0; height: 0; border: 3.5px solid transparent; border-top: 5px solid currentColor; border-bottom: 0; }

.top { height: 50px; background: #242637; display: flex; justify-content: space-between; align-items: stretch; color: #e6e6e6; }
.menu { width: 800px; padding: 26px 0 0 8px; display: flex; font-size: 12px; }
.menu b { font-weight: 400; }
.doc { flex: 1; padding: 17px 0 0 100px; font-size: 13.5px; font-weight: 500; }
.account { width: 259px; display: flex; align-items: flex-start; }
.publish, .publish-more { margin-top: 15px; height: 20px; background: #1b6aa3; color: #fff; display: flex; align-items: center; justify-content: center; font-weight: 700; font-size: 11px; }
.publish { width: 80px; border-radius: 2px 0 0 2px; }
.publish-more { width: 20px; margin-left: 1px; border-radius: 0 2px 2px 0; }
.user { margin: 8px 0 0 14px; width: 102px; height: 34px; border: solid #0c0d14; border-width: 0 1px; padding: 4px 9px 4px 8px; display: flex; justify-content: space-between; line-height: 13px; }
.user .tri { margin-top: 4px; }
.close { margin: 19px 0 0 16px; fill: none; stroke: #ccc; stroke-width: 1.2; }

.toolbar { height: 34px; flex: none; background: #f4f4f4; border-bottom: 1px solid #d0d0d0; display: flex; justify-content: space-between; }
.showme { display: flex; align-items: center; gap: 5px; padding-right: 20px; }

main { flex: 1; display: flex; min-height: 0; }
aside { width: 167px; border-right: 1px solid #d0d0d0; background: #fafafa; display: flex; flex-direction: column; }
.side-tabs { display: flex; height: 23px; font-size: 12px; }
.st { border: solid #d4d4d4; border-width: 0 0 1px 1px; flex: 1; padding: 0 7px 1px 10px; display: flex; justify-content: space-between; align-items: center; }
.st.on { flex: none; width: 88px; border: 0; }
h4 { font-size: 12px; line-height: 16px; padding-left: 10px; }
.devices { height: 63px; padding: 5px 0 0 20px; border-bottom: 1px solid #d4d4d4; }
.dev { height: 12px; width: 126px; line-height: 11px; }
.dev.on { background: #d0d0d0; }
.dev.ph { padding-left: 5px; line-height: 12px; }
.preview { margin-top: 8px; width: 113px; height: 20px; border: 1px solid #555; border-radius: 1px; background: #fff; display: flex; justify-content: center; align-items: center; padding-bottom: 1px; }
.size { height: 52px; padding-top: 8px; border-bottom: 1px solid #d4d4d4; }
.drop { margin: 7px 0 0 20px; width: 126px; height: 16px; padding: 0 6px 1px 3px; border-bottom: 1px solid #bbb; font-size: 10.5px; display: flex; align-items: center; justify-content: space-between; }
.sheets { padding-top: 8px; height: 551px; border-bottom: 1px solid #d4d4d4; }
.sheets h4 { height: 18px; }
.sheet { height: 19.17px; margin: 0 10px; padding-left: 5px; display: flex; align-items: center; }
.sheet span { line-height: 19px; }
.sheet svg { margin-top: 2px; }
.sheet.on { background: #d2d2d2; }
.objects { padding-top: 7px; }
.objects h4 { height: 24px; }
.obj { height: 16.65px; padding-left: 13px; display: flex; align-items: center; gap: 5.5px; }
.mode { margin: 6px 0 0 10px; width: 146px; height: 20px; display: flex; }
.mode b { flex: 1; font-weight: 400; border: 1px solid #bbb; background: #fff; display: flex; justify-content: center; align-items: center; padding-bottom: 2px; }
.mode b:first-child { background: #666; border-color: #666; color: #fff; font-weight: 500; }
.check { margin: 4px 0 0 15px; display: flex; gap: 5px; line-height: 16px; }
.check i { width: 12px; height: 12px; margin-top: 4px; border: 1px solid #555; background: #fff; }

.board { position: relative; margin-left: 6px; width: 1745px; height: 917px; background: #000; padding: 10px 0 0 10px; display: flex; flex-direction: column; gap: 7px; font-family: "Noto Sans", "Open Sans", sans-serif; }
.row { display: flex; gap: 6px; flex: none; }
.r1 { height: 271px; }
.r2 { height: 248px; }
.r3 { height: 364px; }
.zone { display: flex; flex-direction: column; flex: none; }
.z1 { width: 588px; }
.z2 { width: 315px; }
.z3 { width: 815px; }
.z4 { width: 449px; }
.z5 { width: 360px; }
.z6 { width: 460px; }
.z7 { width: 443px; }
h3 { height: 29px; flex: none; margin-right: 1px; background: #b4b4b4; color: #fff; font-size: 13.5px; font-weight: 500; line-height: 19px; padding-top: 6px; text-align: center; }
h3 b { font-weight: 700; font-size: 13px; }
h3.two { height: 48px; }
h3.dark { background: #666; }
h3.ringed { width: 458px; border: 3px solid #c1bfc0; padding-top: 3px; }
.z1 h3 { width: 586px; }
.chart { margin: 4px 0 0 1px; fill: #fff; font-family: "Noto Sans", "Open Sans", sans-serif; }
.r1 .chart { margin-top: 5px; }
.r2 .z1 .chart { margin: 2px 0 0; }
.z3 .chart, .z4 .chart, .z7 .chart { margin-left: 2px; }
.filters { display: flex; gap: 7px; height: 144px; margin-bottom: 6px; }
.filter { background: #b4b4b4; padding: 1px 1px 0 1px; font-size: 10.5px; }
.f1 { width: 117px; color: #fff; font-weight: 700; font-size: 10px; }
.f2 { flex: 1; color: #000; padding-right: 2px; }
.sel { margin-left: 1px; height: 17px; border: 1px solid #f0f0f0; background: #d6d6d6; display: flex; align-items: center; justify-content: space-between; padding: 0 5px 0 3px; line-height: 15px; }
.f2 .sel { border-color: #777; }
.sel .tri { border-width: 4px 2.5px 0; margin-top: 2px; }
.wordmark { font: 700 51px Inter, Lato, sans-serif; font-feature-settings: "cv11"; fill: #fff; }
.scroller { display: flex; margin: 4px 0 0 2px; }
.scroller .chart { margin: 0; }
.bar { width: 18px; height: 169px; background: #f5f5f5; }
.bar i { display: block; height: 48px; background: #e0e0e0; }
.map { margin: 4px 0 0 1px; font-family: "Noto Sans", sans-serif; }
.credit { font-family: Roboto, sans-serif; font-weight: 500; }
.selection { position: absolute; left: 599px; top: 283px; width: 324px; height: 257px; border: 2px solid #6a6a6a; }
.grip { position: absolute; left: 139px; top: -11px; width: 42px; height: 9px; background: rgba(85, 85, 85, .8); padding: 2px 3px; }
.grip i { display: block; height: 1px; background: #eee; margin-bottom: 2px; }
.tools { position: absolute; left: 321px; top: -2px; width: 17px; height: 70px; background: rgba(75, 75, 75, .82); }

.tabs { height: 26px; flex: none; background: #e5e5e5; border: solid #c8c8c8; border-width: 1px 0; display: flex; color: #6b6b6b; }
.tab { border-right: 1px solid #c8c8c8; flex: none; display: flex; justify-content: center; padding: 1px 0 0 3px; }
.src { width: 104.5px; justify-content: flex-start; padding-left: 9px; gap: 4px; }
.src svg { margin-top: 6px; }
.cur { width: 89.5px; background: #fafafa; color: #222; gap: 4px; }
.cur svg { margin-top: 5px; }
.add { width: 26.7px; }
.add svg { margin-top: 4px; fill: none; stroke: #666; stroke-width: 1.1; }
.status { height: 14px; flex: none; background: #ebebeb; display: flex; gap: 10px; padding-left: 8px; font: 8.5px/14px "Noto Sans", sans-serif; color: #222; }
</style>
